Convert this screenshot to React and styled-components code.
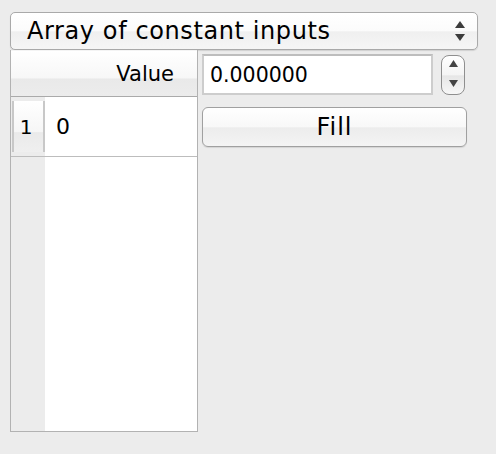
import React from 'react';
import styled, { createGlobalStyle } from 'styled-components';

const GlobalStyle = createGlobalStyle`
  html, body {
    margin: 0;
    padding: 0;
    background: #ececec;
  }
  body {
    font-family: "DejaVu Sans", "Liberation Sans", sans-serif;
    color: #000;
  }
`;

const Page = styled.div`
  width: 496px;
  height: 454px;
  padding: 12px 0 0 10px;
  box-sizing: border-box;
  display: flex;
  flex-direction: column;
`;

const Combo = styled.div`
  width: 468px;
  height: 38px;
  box-sizing: border-box;
  border: 1px solid #a9a9a9;
  border-radius: 5px;
  background: linear-gradient(#ffffff 0%, #fbfbfb 50%, #efefef 52%, #f6f6f6 100%);
  display: flex;
  align-items: center;
  justify-content: space-between;
  padding: 0 12px 0 16px;
  font-size: 24px;
  letter-spacing: 0.6px;
  box-shadow: 0 1px 1px rgba(0, 0, 0, 0.12);
`;

const Body = styled.div`
  display: flex;
  gap: 4px;
`;

const Table = styled.div`
  width: 188px;
  height: 382px;
  box-sizing: border-box;
  border: 1px solid #b2b2b2;
  border-top: none;
  background: #fff;
  display: flex;
  flex-direction: column;
`;

const Header = styled.div`
  height: 47px;
  flex: none;
  box-sizing: border-box;
  border-bottom: 1px solid #aaa;
  border-top: 1px solid #f4f4f4;
  background: linear-gradient(#ffffff 0%, #f7f7f7 60%, #e9e9e9 62%, #ececec 100%);
  display: flex;
  align-items: center;
  justify-content: flex-end;
  padding-right: 23px;
  font-size: 21px;
`;

const Row = styled.div`
  display: flex;
  height: 60px;
  flex: none;
  box-sizing: border-box;
  border-bottom: 1px solid #bdbdbd;
`;

const RowHead = styled.div`
  width: 34px;
  flex: none;
  box-sizing: border-box;
  padding: 4px 0 4px 1px;
  background: #ececec;
  display: flex;
`;

const RowHeadCell = styled.div`
  flex: 1;
  box-sizing: border-box;
  border-left: 2px solid #c8c8c8;
  border-right: 2px solid #c8c8c8;
  background: linear-gradient(#ffffff 0%, #f6f6f6 60%, #eaeaea 62%, #efefef 100%);
  display: flex;
  align-items: center;
  justify-content: center;
  font-size: 20px;
  padding-right: 5px;
`;

const Cell = styled.div`
  flex: 1;
  display: flex;
  align-items: center;
  padding-left: 11px;
  font-size: 22px;
`;

const Filler = styled.div`
  flex: 1;
  display: flex;
`;

const FillerHead = styled.div`
  width: 34px;
  background: #ececec;
`;

const Panel = styled.div`
  display: flex;
  flex-direction: column;
  padding-top: 4px;
  gap: 12px;
`;

const SpinRow = styled.div`
  display: flex;
  align-items: center;
  gap: 8px;
`;

const LineEdit = styled.div`
  width: 231px;
  height: 41px;
  box-sizing: border-box;
  border: 2px solid #cdcdcd;
  border-top-color: #bdbdbd;
  background: #fff;
  display: flex;
  align-items: center;
  padding-left: 6px;
  font-size: 20.5px;
`;

const SpinButtons = styled.div`
  width: 24px;
  height: 40px;
  box-sizing: border-box;
  border: 1px solid #8f8f8f;
  border-radius: 8px;
  background: linear-gradient(#ffffff 0%, #f4f4f4 50%, #e6e6e6 52%, #f7f7f7 100%);
  display: flex;
  flex-direction: column;
  align-items: center;
  justify-content: space-between;
  padding: 4px 0 7px;
  margin-top: 1px;
`;

const Button = styled.div`
  width: 265px;
  height: 40px;
  box-sizing: border-box;
  border: 1px solid #a0a0a0;
  border-radius: 6px;
  background: linear-gradient(#ffffff 0%, #f8f8f8 50%, #ececec 52%, #f4f4f4 100%);
  display: flex;
  align-items: center;
  justify-content: center;
  font-size: 24px;
  letter-spacing: 1px;
  box-shadow: 0 1px 1px rgba(0, 0, 0, 0.1);
`;

const Arrows = ({ w = 10, h = 7, gap = 6 }) => (
  <svg width={w} height={h * 2 + gap} viewBox={`0 0 ${w} ${h * 2 + gap}`}>
    <polygon points={`${w / 2},0 ${w},${h} 0,${h}`} fill="#3c3c3c" />
    <polygon points={`0,${h + gap} ${w},${h + gap} ${w / 2},${h * 2 + gap}`} fill="#3c3c3c" />
  </svg>
);

const Tri = ({ up }) => (
  <svg width="9" height="7" viewBox="0 0 9 7">
    <polygon points={up ? '4.5,0 9,7 0,7' : '0,0 9,0 4.5,7'} fill="#444" />
  </svg>
);

export default function App() {
  return (
    <Page>
      <GlobalStyle />
      <Combo>
        <span>Array of constant inputs</span>
        <Arrows />
      </Combo>
      <Body>
        <Table>
          <Header>Value</Header>
          <Row>
            <RowHead>
              <RowHeadCell>1</RowHeadCell>
            </RowHead>
            <Cell>0</Cell>
          </Row>
          <Filler>
            <FillerHead />
          </Filler>
        </Table>
        <Panel>
          <SpinRow>
            <LineEdit>0.000000</LineEdit>
            <SpinButtons>
              <Tri up />
              <Tri />
            </SpinButtons>
          </SpinRow>
          <Button>Fill</Button>
        </Panel>
      </Body>
    </Page>
  );
}
